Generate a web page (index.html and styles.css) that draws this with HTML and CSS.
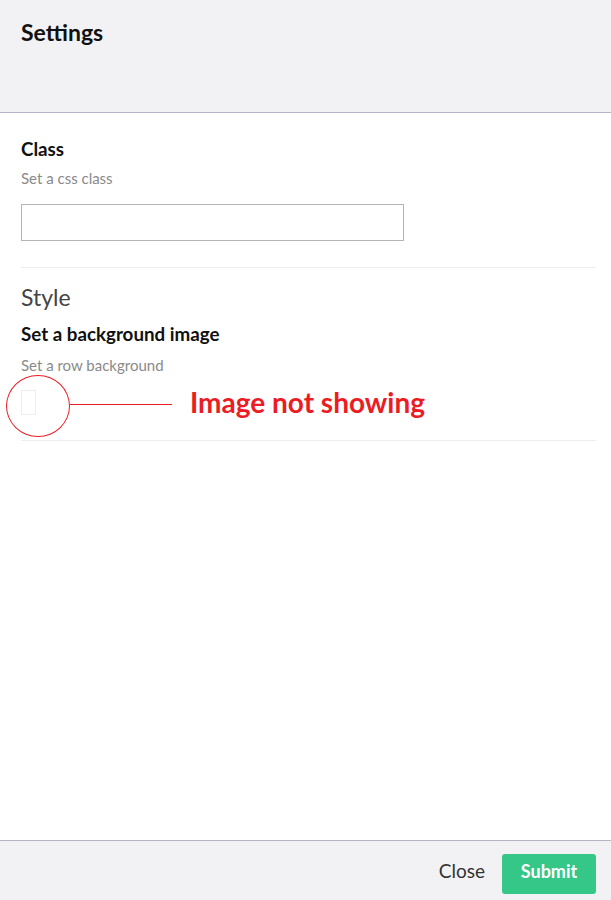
FILE: index.html
```html
<!DOCTYPE html>
<html>
<head>
<meta charset="utf-8">
<link rel="stylesheet" href="styles.css">
</head>
<body>
<div class="page">
  <header class="header">
    <h1 class="title">Settings</h1>
  </header>
  <main class="content">
    <section class="group">
      <div class="label">Class</div>
      <div class="hint">Set a css class</div>
      <input class="text-input" type="text">
    </section>
    <section class="group style-group">
      <h2 class="section-title">Style</h2>
      <div class="label label-bg">Set a background image</div>
      <div class="hint hint-bg">Set a row background</div>
      <div class="image-row">
        <div class="image-box"></div>
        <div class="note-circle"></div>
        <div class="note-line"></div>
        <div class="note-text">Image not showing</div>
      </div>
    </section>
  </main>
  <footer class="footer">
    <button class="btn-close" type="button">Close</button>
    <button class="btn-submit" type="button">Submit</button>
  </footer>
</div>
</body>
</html>
```
FILE: styles.css
```css
* { box-sizing: border-box; }
html, body { margin: 0; padding: 0; }
body {
  font-family: Lato, "Open Sans", sans-serif;
  color: #111;
  background: #fff;
}
.page {
  height: 900px;
  display: flex;
  flex-direction: column;
}
.header {
  height: 113px;
  background: #f2f2f4;
  border-bottom: 1px solid #b5b3c6;
  padding: 19px 21px 0;
  flex: none;
}
.title {
  margin: 0;
  font-size: 23px;
  line-height: 1.2;
  font-weight: 700;
  color: #111;
}
.content {
  flex: 1;
  padding: 0 15px 0 21px;
}
.group {
  border-bottom: 1px solid #eeeeee;
  padding-top: 25px;
  padding-bottom: 26px;
  display: flex;
  flex-direction: column;
  align-items: flex-start;
}
.label {
  font-size: 18.75px;
  line-height: 1.2;
  font-weight: 700;
  color: #111;
}
.hint {
  font-size: 15px;
  line-height: 1.2;
  color: #8a8a8a;
  margin-top: 8px;
}
.text-input {
  margin-top: 17px;
  width: 383px;
  height: 37px;
  border: 1px solid #b4b4b4;
  border-radius: 0;
  padding: 0 8px;
  font-family: inherit;
  font-size: 14px;
  background: #fff;
  outline: none;
}
.style-group {
  padding-top: 16px;
  padding-bottom: 25px;
}
.section-title {
  margin: 0;
  font-size: 23px;
  line-height: 1.2;
  font-weight: 400;
  color: #444;
}
.label-bg {
  margin-top: 12px;
}
.hint-bg {
  margin-top: 10px;
}
.image-row {
  position: relative;
  width: 100%;
  margin-top: 16px;
}
.image-box {
  width: 15px;
  height: 25px;
  border: 1px solid #eeeeee;
  background: #fff;
}
.note-circle {
  position: absolute;
  left: -15px;
  top: -15px;
  width: 64px;
  height: 62px;
  border: 1px solid #ec1c24;
  border-radius: 50%;
}
.note-line {
  position: absolute;
  left: 49px;
  top: 14px;
  width: 102px;
  height: 0;
  border-top: 1px solid #ec1c24;
}
.note-text {
  position: absolute;
  left: 169px;
  top: -4px;
  font-size: 28px;
  line-height: 1.2;
  font-weight: 700;
  color: #ec1c24;
  white-space: nowrap;
}
.footer {
  flex: none;
  height: 60px;
  background: #f2f2f4;
  border-top: 1px solid #b5b3c6;
  display: flex;
  align-items: flex-start;
  justify-content: flex-end;
  padding: 13px 15px 0 0;
  gap: 17px;
}
.btn-close {
  border: none;
  background: transparent;
  font-family: inherit;
  font-size: 19px;
  line-height: 1.2;
  color: #333;
  padding: 0 0 5px;
  height: 40px;
  cursor: pointer;
}
.btn-submit {
  border: none;
  background: #34c788;
  color: #fff;
  font-family: inherit;
  font-size: 18px;
  line-height: 1.2;
  font-weight: 700;
  width: 94px;
  height: 40px;
  border-radius: 3px;
  padding: 0 0 5px;
  cursor: pointer;
}
```
